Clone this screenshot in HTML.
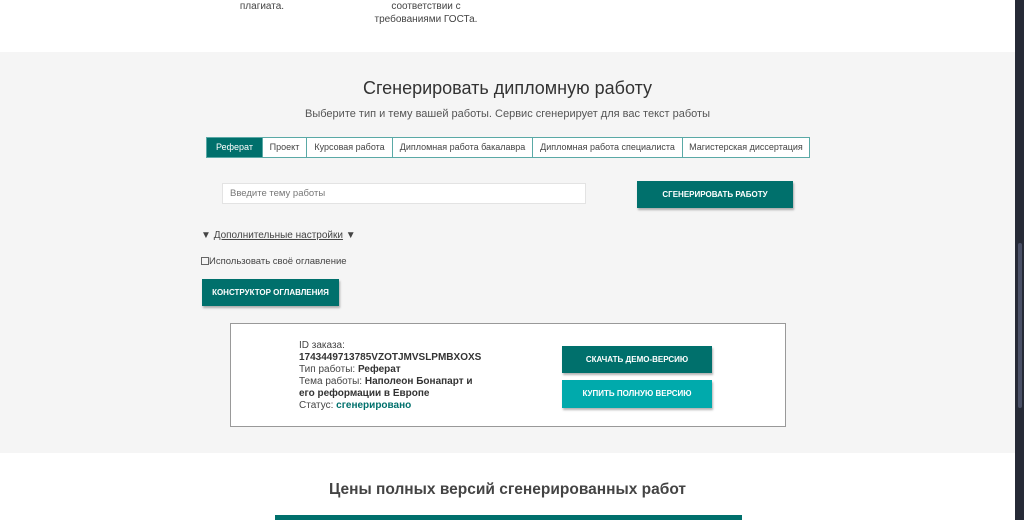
<!DOCTYPE html>
<html><head><meta charset="utf-8"><style>
*{box-sizing:border-box;margin:0;padding:0}
body{width:1024px;height:520px;overflow:hidden;background:#fff;font-family:"Liberation Sans",Arial,sans-serif;color:#333;position:relative}
.abs{position:absolute}
.top{font-size:10px;color:#444;line-height:13px;text-align:center}
.gray{left:0;top:52px;width:1015px;height:401px;background:#f5f5f5}
h2{font-size:18px;font-weight:normal;color:#333;text-align:center}
.tabs{left:206px;top:137px;height:21px;display:flex;border:1px solid #5aa9a6;background:#fff}
.tabs div{font-size:9px;color:#444;line-height:19px;border-left:1px solid #5aa9a6;text-align:center;white-space:nowrap;overflow:hidden}
.tabs div:first-child{border-left:none;background:#00706c;color:#fff}
.btn{background:#00706c;color:#fff;font-weight:bold;font-size:8px;text-align:center;box-shadow:1px 2px 2px rgba(0,0,0,.3)}
.card{left:230px;top:323px;width:556px;height:104px;border:1px solid #999;background:#fff}
.info{font-size:10px;line-height:12px;color:#444}
.info b{color:#333}
</style></head><body>
<div class="abs top" style="left:222px;top:0;width:80px">плагиата.</div>
<div class="abs top" style="left:356px;top:0;width:140px">соответствии с<br>требованиями ГОСТа.</div>
<div class="abs gray"></div>
<h2 class="abs" style="left:0;width:1015px;top:78px">Сгенерировать дипломную работу</h2>
<div class="abs" style="left:0;width:1015px;top:108px;text-align:center;font-size:11px;color:#555">Выберите тип и тему вашей работы. Сервис сгенерирует для вас текст работы</div>
<div class="abs tabs"><div style="width:55px">Реферат</div><div style="width:44px">Проект</div><div style="width:86px">Курсовая работа</div><div style="width:140px">Дипломная работа бакалавра</div><div style="width:150px">Дипломная работа специалиста</div><div style="width:127px">Магистерская диссертация</div></div>
<div class="abs" style="left:222px;top:183px;width:364px;height:21px;background:#fff;border:1px solid #e3e3e3;font-size:9.5px;color:#777;line-height:19px;padding-left:7px">Введите тему работы</div>
<div class="abs btn" style="left:637px;top:181px;width:156px;height:27px;line-height:27px">СГЕНЕРИРОВАТЬ РАБОТУ</div>
<div class="abs" style="left:201px;top:230px;font-size:10px;color:#444">▼ <u>Дополнительные настройки</u> ▼</div>
<div class="abs" style="left:201px;top:256px;font-size:9.5px;color:#444"><span style="display:inline-block;width:8px;height:8px;border:1px solid #666;vertical-align:-1px"></span>Использовать своё оглавление</div>
<div class="abs btn" style="left:202px;top:279px;width:137px;height:27px;line-height:27px">КОНСТРУКТОР ОГЛАВЛЕНИЯ</div>
<div class="abs card"></div>
<div class="abs info" style="left:299px;top:340px">ID заказа:<br><b>1743449713785VZOTJMVSLPMBXOXS</b><br>Тип работы: <b>Реферат</b><br>Тема работы: <b>Наполеон Бонапарт и<br>его реформации в Европе</b><br>Статус: <b style="color:#00706c">сгенерировано</b></div>
<div class="abs btn" style="left:562px;top:346px;width:150px;height:27px;line-height:27px">СКАЧАТЬ ДЕМО-ВЕРСИЮ</div>
<div class="abs btn" style="left:562px;top:380px;width:150px;height:28px;line-height:28px;background:#00aaac">КУПИТЬ ПОЛНУЮ ВЕРСИЮ</div>
<h2 class="abs" style="left:0;width:1015px;top:481px;font-weight:bold;font-size:15.5px;color:#444">Цены полных версий сгенерированных работ</h2>
<div class="abs" style="left:275px;top:515px;width:467px;height:5px;background:#00706c"></div>
<div class="abs" style="left:1015px;top:0;width:9px;height:520px;background:#262a36"></div>
<div class="abs" style="left:1018px;top:243px;width:4px;height:165px;background:#4a5066;border-radius:2px"></div>
</body></html>
